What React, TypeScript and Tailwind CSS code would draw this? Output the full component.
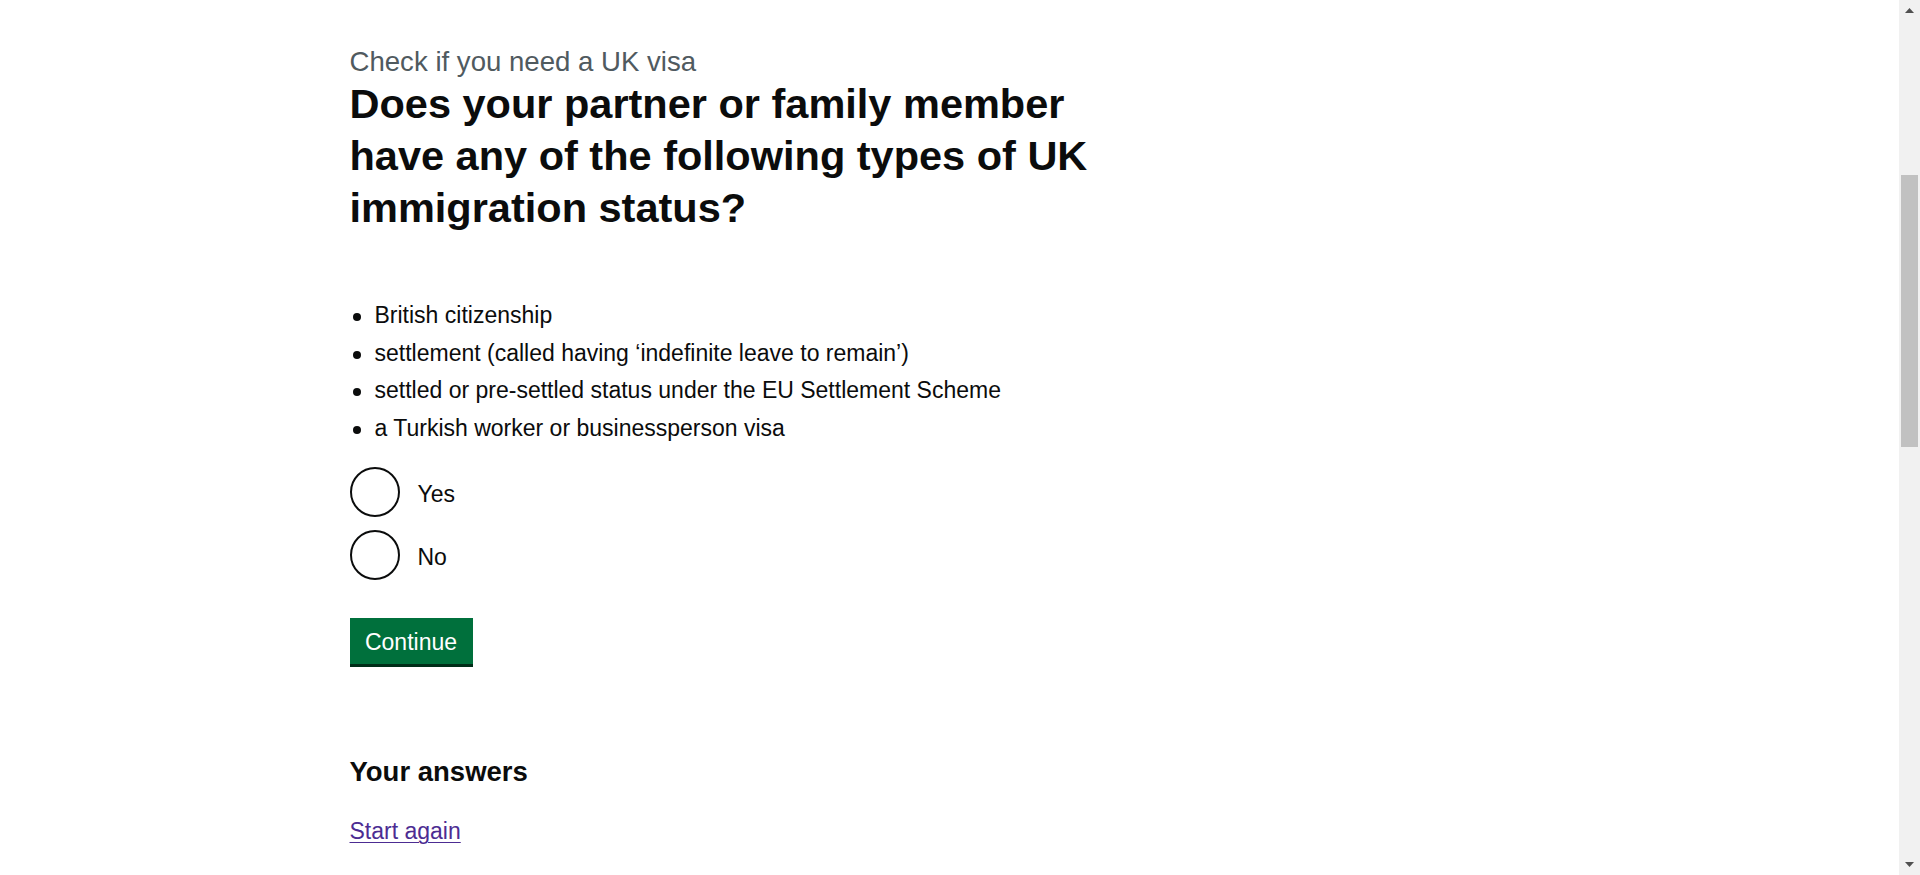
import React from "react";

const items = [
  "British citizenship",
  "settlement (called having \u2018indefinite leave to remain\u2019)",
  "settled or pre-settled status under the EU Settlement Scheme",
  "a Turkish worker or businessperson visa",
];

function Radio({ label }: { label: string }) {
  return (
    <div className="flex h-[50px] items-center">
      <span className="h-[50px] w-[50px] shrink-0 rounded-full border-[2.5px] border-[#0b0c0c] bg-white" />
      <span className="ml-[18px] pt-[5px] text-[23px] leading-[25px] text-[#0b0c0c]">{label}</span>
    </div>
  );
}

export default function App() {
  return (
    <div className="flex h-[875px] w-full overflow-hidden bg-white font-['Liberation_Sans',Arial,sans-serif] text-[#0b0c0c]">
      <main className="flex-1">
        <div className="mx-auto w-[1200px] pt-[46px]">
          <div className="w-[787px]">
            <p className="text-[27.6px] leading-[32px] text-[#505a5f]">Check if you need a UK visa</p>
            <h1 className="text-[41.5px] font-bold leading-[52px] text-[#0b0c0c]">
              Does your partner or family member have any of the following types of UK immigration status?
            </h1>
            <ul className="mt-[63px]">
              {items.map((t) => (
                <li key={t} className="flex items-start text-[23px] leading-[37.5px]">
                  <span className="ml-[3px] mt-[16px] h-[8px] w-[8px] shrink-0 rounded-full bg-[#0b0c0c]" />
                  <span className="ml-[14px]">{t}</span>
                </li>
              ))}
            </ul>
            <div className="mt-[20px] flex flex-col gap-[12.5px]">
              <Radio label="Yes" />
              <Radio label="No" />
            </div>
            <button className="mt-[38.5px] flex h-[46px] w-[123px] items-center justify-center bg-[#00703c] pt-[2px] text-[23px] leading-[25px] text-white shadow-[0_3px_0_#002d18]">
              Continue
            </button>
            <h2 className="mt-[91.5px] text-[27.5px] font-bold leading-[32px]">Your answers</h2>
            <a
              href="#"
              className="mt-[31.5px] inline-block text-[23px] leading-[25px] text-[#4c2c92] underline decoration-1 underline-offset-[3px]"
            >
              Start again
            </a>
          </div>
        </div>
      </main>
      <aside className="flex w-[21px] shrink-0 flex-col bg-[#f1f1f1]">
        <div className="flex h-[21px] items-center justify-center">
          <svg width="9" height="5" viewBox="0 0 9 5">
            <polygon points="0,5 4.5,0 9,5" fill="#505050" />
          </svg>
        </div>
        <div className="flex-1 px-[2px]">
          <div className="mt-[154px] h-[272px] w-full bg-[#c1c1c1]" />
        </div>
        <div className="flex h-[21px] items-center justify-center">
          <svg width="9" height="5" viewBox="0 0 9 5">
            <polygon points="0,0 9,0 4.5,5" fill="#505050" />
          </svg>
        </div>
      </aside>
    </div>
  );
}
